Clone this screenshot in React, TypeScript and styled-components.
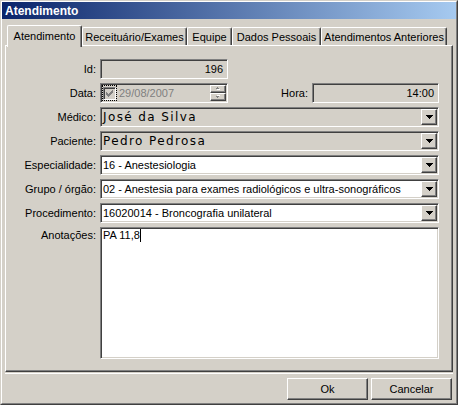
import React from 'react';
import styled, { createGlobalStyle, css } from 'styled-components';

const GlobalStyle = createGlobalStyle`
  html, body { margin: 0; padding: 0; background: #D4D0C8; }
  body { font-family: "Liberation Sans", Arial, sans-serif; font-size: 11px; color: #000; }
  * { box-sizing: border-box; }
`;

const FACE = '#D4D0C8';

const sunken = css`
  border: 1px solid;
  border-color: #808080 #ffffff #ffffff #808080;
  box-shadow: inset 1px 1px 0 #404040, inset -1px -1px 0 ${FACE};
`;

const raised = css`
  border: 1px solid;
  border-color: #ffffff #404040 #404040 #ffffff;
  box-shadow: inset -1px -1px 0 #808080;
`;

const Window = styled.div`
  width: 458px;
  height: 405px;
  background: ${FACE};
  border: 1px solid;
  border-color: ${FACE} #404040 #404040 ${FACE};
`;

const Frame = styled.div`
  height: 100%;
  border: 1px solid;
  border-color: #ffffff #808080 #808080 #ffffff;
  display: flex;
  flex-direction: column;
`;

const TitleBar = styled.div`
  flex: none;
  height: 17px;
  background: linear-gradient(90deg, #0a246a 0%, #a6caf0 100%);
  color: #fff;
  font: bold 12px "Liberation Sans", Arial, sans-serif;
  display: flex;
  align-items: center;
  padding-left: 3px;
`;

const Body = styled.div`
  flex: 1;
  display: flex;
  flex-direction: column;
  padding: 6px 3px 0;
`;

const TabRow = styled.div`
  display: flex;
  align-items: flex-end;
  height: 20px;
  padding-left: 2px;
  position: relative;
  z-index: 1;
`;

const Tab = styled.div<{ $w: number; $active?: boolean }>`
  flex: none;
  width: ${p => p.$w}px;
  height: ${p => (p.$active ? 22 : 18)}px;
  margin-bottom: ${p => (p.$active ? -2 : 0)}px;
  padding-top: ${p => (p.$active ? 4 : 3)}px;
  background: ${FACE};
  border-top: 1px solid #fff;
  border-left: 1px solid #fff;
  border-right: 1px solid #404040;
  box-shadow: inset -1px 0 0 #808080;
  border-radius: 2px 2px 0 0;
  text-align: center;
  line-height: 13px;
  white-space: nowrap;
`;

const Panel = styled.div`
  height: 327px;
  flex: none;
  border: 1px solid;
  border-color: #fff #404040 #404040 #fff;
  box-shadow: inset -1px -1px 0 #808080;
  padding: 13px 0 0 1px;
`;

const Form = styled.div`
  display: grid;
  grid-template-columns: 89px 339px;
  grid-template-rows: repeat(7, 20px) 132px;
  column-gap: 4px;
  row-gap: 4px;
`;

const Label = styled.div<{ $top?: boolean }>`
  display: flex;
  justify-content: flex-end;
  align-items: ${p => (p.$top ? 'flex-start' : 'center')};
  padding-top: ${p => (p.$top ? 2 : 0)}px;
  white-space: nowrap;
  line-height: 13px;
`;

const FieldCell = styled.div`
  display: flex;
  align-items: stretch;
  gap: 4px;
`;

const ReadField = styled.div<{ $w: number }>`
  ${sunken};
  width: ${p => p.$w}px;
  background: ${FACE};
  display: flex;
  align-items: center;
  justify-content: flex-end;
  padding: 0 4px;
`;

const DateField = styled.div`
  ${sunken};
  width: 128px;
  background: ${FACE};
  display: flex;
  align-items: stretch;
  padding: 1px;
`;

const CheckFocus = styled.div`
  width: 15px;
  border: 1px dotted #000;
  display: flex;
  align-items: center;
  justify-content: center;
`;

const CheckBox = styled.div`
  ${sunken};
  width: 13px;
  height: 13px;
  background: ${FACE};
  display: flex;
  align-items: center;
  justify-content: center;
`;

const DateText = styled.div`
  flex: 1;
  display: flex;
  align-items: center;
  padding-left: 2px;
  color: #808080;
`;

const Spin = styled.div`
  width: 16px;
  display: flex;
  flex-direction: column;
`;

const SpinButton = styled.div`
  ${raised};
  flex: 1;
  background: ${FACE};
  display: flex;
  align-items: center;
  justify-content: center;
`;

const Spacer = styled.div`
  flex: 1;
`;

const InlineLabel = styled.div`
  display: flex;
  align-items: center;
`;

const Combo = styled.div<{ $bg: string }>`
  ${sunken};
  flex: 1;
  background: ${p => p.$bg};
  display: flex;
  align-items: stretch;
  padding: 1px;
`;

const ComboText = styled.div<{ $wide?: boolean }>`
  flex: 1;
  display: flex;
  align-items: center;
  padding-left: 1px;
  white-space: nowrap;
  overflow: hidden;
  ${p =>
    p.$wide &&
    css`
      font-family: "DejaVu Sans", Verdana, sans-serif;
      font-size: 12px;
      letter-spacing: 1.4px;
    `}
`;

const DropButton = styled.div`
  ${raised};
  width: 16px;
  background: ${FACE};
  display: flex;
  align-items: center;
  justify-content: center;
`;

const Memo = styled.div`
  ${sunken};
  background: #fff;
  padding: 1px 2px;
  line-height: 13px;
`;

const Caret = styled.span`
  display: inline-block;
  width: 1px;
  height: 13px;
  background: #000;
  vertical-align: top;
`;

const Footer = styled.div`
  flex: 1;
  margin-top: 1px;
  border-top: 1px solid #fff;
  display: flex;
  justify-content: flex-end;
  align-items: flex-start;
  gap: 3px;
  padding: 4px 1px 0 0;
`;

const Button = styled.div`
  ${raised};
  width: 81px;
  height: 22px;
  background: ${FACE};
  display: flex;
  align-items: center;
  justify-content: center;
`;

const DownArrow = () => (
  <svg width="7" height="4" viewBox="0 0 7 4" shapeRendering="crispEdges">
    <path d="M0 0h7v1H0zM1 1h5v1H1zM2 2h3v1H2zM3 3h1v1H3z" fill="#000" />
  </svg>
);

const SmallArrow = ({ up }: { up?: boolean }) => (
  <svg width="6" height="4" viewBox="0 0 6 4" shapeRendering="crispEdges">
    <g transform={up ? undefined : 'matrix(1 0 0 -1 0 3)'}>
      <path d="M3 1h1v1H3zM2 2h3v1H2z" fill="#fff" />
      <path d="M2 0h1v1H2zM1 1h3v1H1z" fill="#808080" />
    </g>
  </svg>
);

const CheckMark = () => (
  <svg width="9" height="9" viewBox="0 0 9 9" shapeRendering="crispEdges">
    <path
      d="M1 3h1v3H1zM2 4h1v3H2zM3 5h1v3H3zM4 4h1v3H4zM5 3h1v3H5zM6 2h1v3H6zM7 1h1v3H7z"
      fill="#808080"
    />
  </svg>
);

const tabs = [
  { label: 'Atendimento', w: 75, active: true },
  { label: 'Receituário/Exames', w: 105 },
  { label: 'Equipe', w: 45 },
  { label: 'Dados Pessoais', w: 89 },
  { label: 'Atendimentos Anteriores', w: 126 },
];

const combos = [
  { label: 'Médico:', value: 'José da Silva', bg: FACE, wide: true },
  { label: 'Paciente:', value: 'Pedro Pedrosa', bg: FACE, wide: true },
  { label: 'Especialidade:', value: '16 - Anestesiologia', bg: '#fff' },
  {
    label: 'Grupo / órgão:',
    value: '02 - Anestesia para exames radiológicos e ultra-sonográficos',
    bg: '#fff',
  },
  { label: 'Procedimento:', value: '16020014 - Broncografia unilateral', bg: '#fff' },
];

export default function App() {
  return (
    <>
      <GlobalStyle />
      <Window>
        <Frame>
          <TitleBar>Atendimento</TitleBar>
          <Body>
            <TabRow>
              {tabs.map(t => (
                <Tab key={t.label} $w={t.w} $active={t.active}>
                  {t.label}
                </Tab>
              ))}
            </TabRow>
            <Panel>
              <Form>
                <Label>Id:</Label>
                <FieldCell>
                  <ReadField $w={128}>196</ReadField>
                </FieldCell>

                <Label>Data:</Label>
                <FieldCell>
                  <DateField>
                    <CheckFocus>
                      <CheckBox>
                        <CheckMark />
                      </CheckBox>
                    </CheckFocus>
                    <DateText>29/08/2007</DateText>
                    <Spin>
                      <SpinButton>
                        <SmallArrow up />
                      </SpinButton>
                      <SpinButton>
                        <SmallArrow />
                      </SpinButton>
                    </Spin>
                  </DateField>
                  <Spacer />
                  <InlineLabel>Hora:</InlineLabel>
                  <ReadField $w={127}>14:00</ReadField>
                </FieldCell>

                {combos.map(c => (
                  <React.Fragment key={c.label}>
                    <Label>{c.label}</Label>
                    <FieldCell>
                      <Combo $bg={c.bg}>
                        <ComboText $wide={c.wide}>{c.value}</ComboText>
                        <DropButton>
                          <DownArrow />
                        </DropButton>
                      </Combo>
                    </FieldCell>
                  </React.Fragment>
                ))}

                <Label $top>Anotações:</Label>
                <Memo>
                  PA 11,8
                  <Caret />
                </Memo>
              </Form>
            </Panel>
            <Footer>
              <Button>Ok</Button>
              <Button>Cancelar</Button>
            </Footer>
          </Body>
        </Frame>
      </Window>
    </>
  );
}
